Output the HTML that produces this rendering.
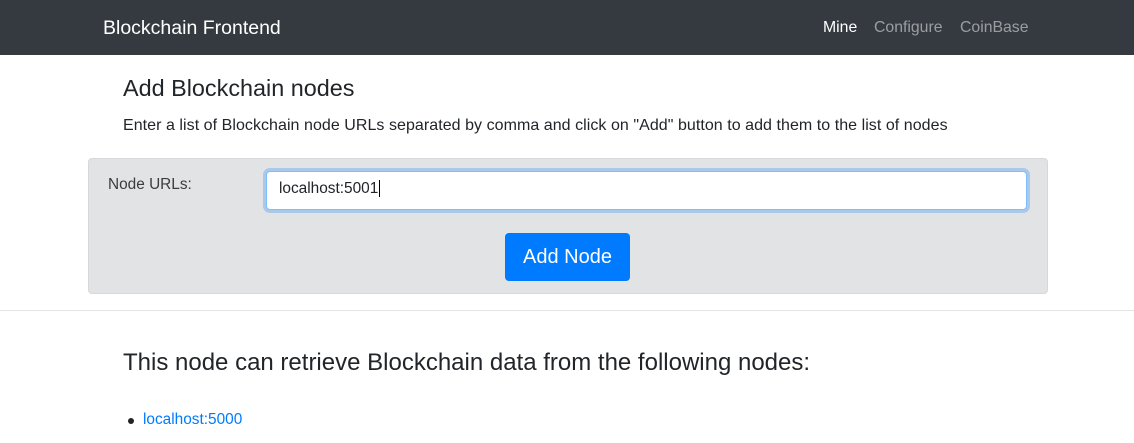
<!DOCTYPE html>
<html><head><meta charset="utf-8"><style>
*{box-sizing:border-box;margin:0;padding:0}
body{width:1134px;height:443px;overflow:hidden;background:#fff;font-family:"Liberation Sans",sans-serif;color:#212529;position:relative}
.nav{position:absolute;left:0;top:0;width:1134px;height:55px;background:#343a40}
.brand{position:absolute;left:103px;top:17px;font-size:19.5px;color:#fff}
.links{position:absolute;top:19px;font-size:15.8px;color:rgba(255,255,255,.5)}
.abs{position:absolute;white-space:nowrap}
.box{position:absolute;left:88px;top:158px;width:960px;height:136px;background:#e2e3e5;border:1px solid #d6d8db;border-radius:4px}
.inp{position:absolute;left:266px;top:171px;width:761px;height:39px;background:#fff;border:1px solid #80bdff;border-radius:4px;box-shadow:0 0 0 3px rgba(0,123,255,.25);font-size:15.4px;padding:8px 12px}
.btn{position:absolute;left:505px;top:233px;width:125px;height:48px;background:#007bff;border-radius:4px;color:#fff;font-size:20px;text-align:center;line-height:48px}
.hr{position:absolute;left:0;top:310px;width:1134px;height:1px;background:#e5e5e5}
</style></head><body>
<div class="nav">
<div class="brand">Blockchain Frontend</div>
<div class="links" style="left:823px;color:#fff">Mine</div>
<div class="links" style="left:874px">Configure</div>
<div class="links" style="left:960px">CoinBase</div>
</div>
<div class="abs" style="left:123px;top:75px;font-size:23.4px">Add Blockchain nodes</div>
<div class="abs" style="left:123px;top:117px;font-size:16px;letter-spacing:0.05px">Enter a list of Blockchain node URLs separated by comma and click on "Add" button to add them to the list of nodes</div>
<div class="box"></div>
<div class="abs" style="left:108px;top:176px;font-size:15.4px;color:#383d41">Node URLs:</div>
<div class="inp">localhost:5001<span style="border-left:1px solid #000;margin-left:1px"></span></div>
<div class="btn">Add Node</div>
<div class="hr"></div>
<div class="abs" style="left:123px;top:349px;font-size:24px">This node can retrieve Blockchain data from the following nodes:</div>
<div class="abs" style="left:128px;top:418px;width:6px;height:6px;border-radius:3px;background:#212529"></div>
<div class="abs" style="left:143px;top:411px;font-size:15.4px;color:#007bff">localhost:5000</div>
</body></html>
